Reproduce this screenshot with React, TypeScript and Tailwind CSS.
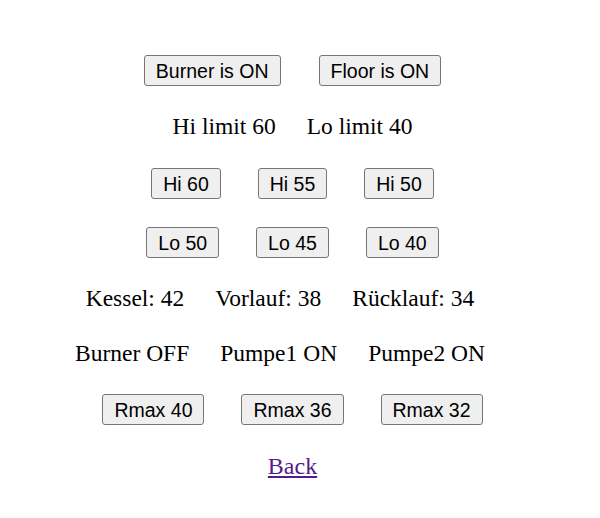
import React from 'react';

const serif = { fontFamily: '"Liberation Serif", "Times New Roman", serif' };
const sans = { fontFamily: '"Liberation Sans", Arial, sans-serif' };

function Btn({ label }: { label: string }) {
  return (
    <button
      type="button"
      style={sans}
      className="h-[31px] px-[11px] border border-[#767676] rounded-[3px] bg-[#efefef] text-[19.5px] leading-[22px] text-black"
    >
      {label}
    </button>
  );
}

function TextRow({ items, shift }: { items: string[]; shift?: boolean }) {
  return (
    <div
      style={serif}
      className={`flex justify-center gap-[31px] h-[27px] text-[23.5px] leading-[27px] text-black whitespace-nowrap ${shift ? 'pr-[25px]' : ''}`}
    >
      {items.map((t) => (
        <span key={t}>{t}</span>
      ))}
    </div>
  );
}

export default function App() {
  return (
    <div className="w-[585px] min-h-[518px] bg-white pt-[55px] flex flex-col">
      <div className="flex justify-center gap-[38px]">
        <Btn label="Burner is ON" />
        <Btn label="Floor is ON" />
      </div>

      <div className="mt-[27px]">
        <TextRow items={['Hi limit 60', 'Lo limit 40']} />
      </div>

      <div className="mt-[28px] flex justify-center gap-[37px]">
        <Btn label="Hi 60" />
        <Btn label="Hi 55" />
        <Btn label="Hi 50" />
      </div>

      <div className="mt-[28px] flex justify-center gap-[37px]">
        <Btn label="Lo 50" />
        <Btn label="Lo 45" />
        <Btn label="Lo 40" />
      </div>

      <div className="mt-[27px]">
        <TextRow items={['Kessel: 42', 'Vorlauf: 38', 'Rücklauf: 34']} shift />
      </div>

      <div className="mt-[28px]">
        <TextRow items={['Burner OFF', 'Pumpe1 ON', 'Pumpe2 ON']} shift />
      </div>

      <div className="mt-[27px] flex justify-center gap-[37px]">
        <Btn label="Rmax 40" />
        <Btn label="Rmax 36" />
        <Btn label="Rmax 32" />
      </div>

      <div className="mt-[28px] flex justify-center">
        <a href="#" style={serif} className="text-[24px] leading-[27px] text-[#551a8b] underline">
          Back
        </a>
      </div>
    </div>
  );
}
